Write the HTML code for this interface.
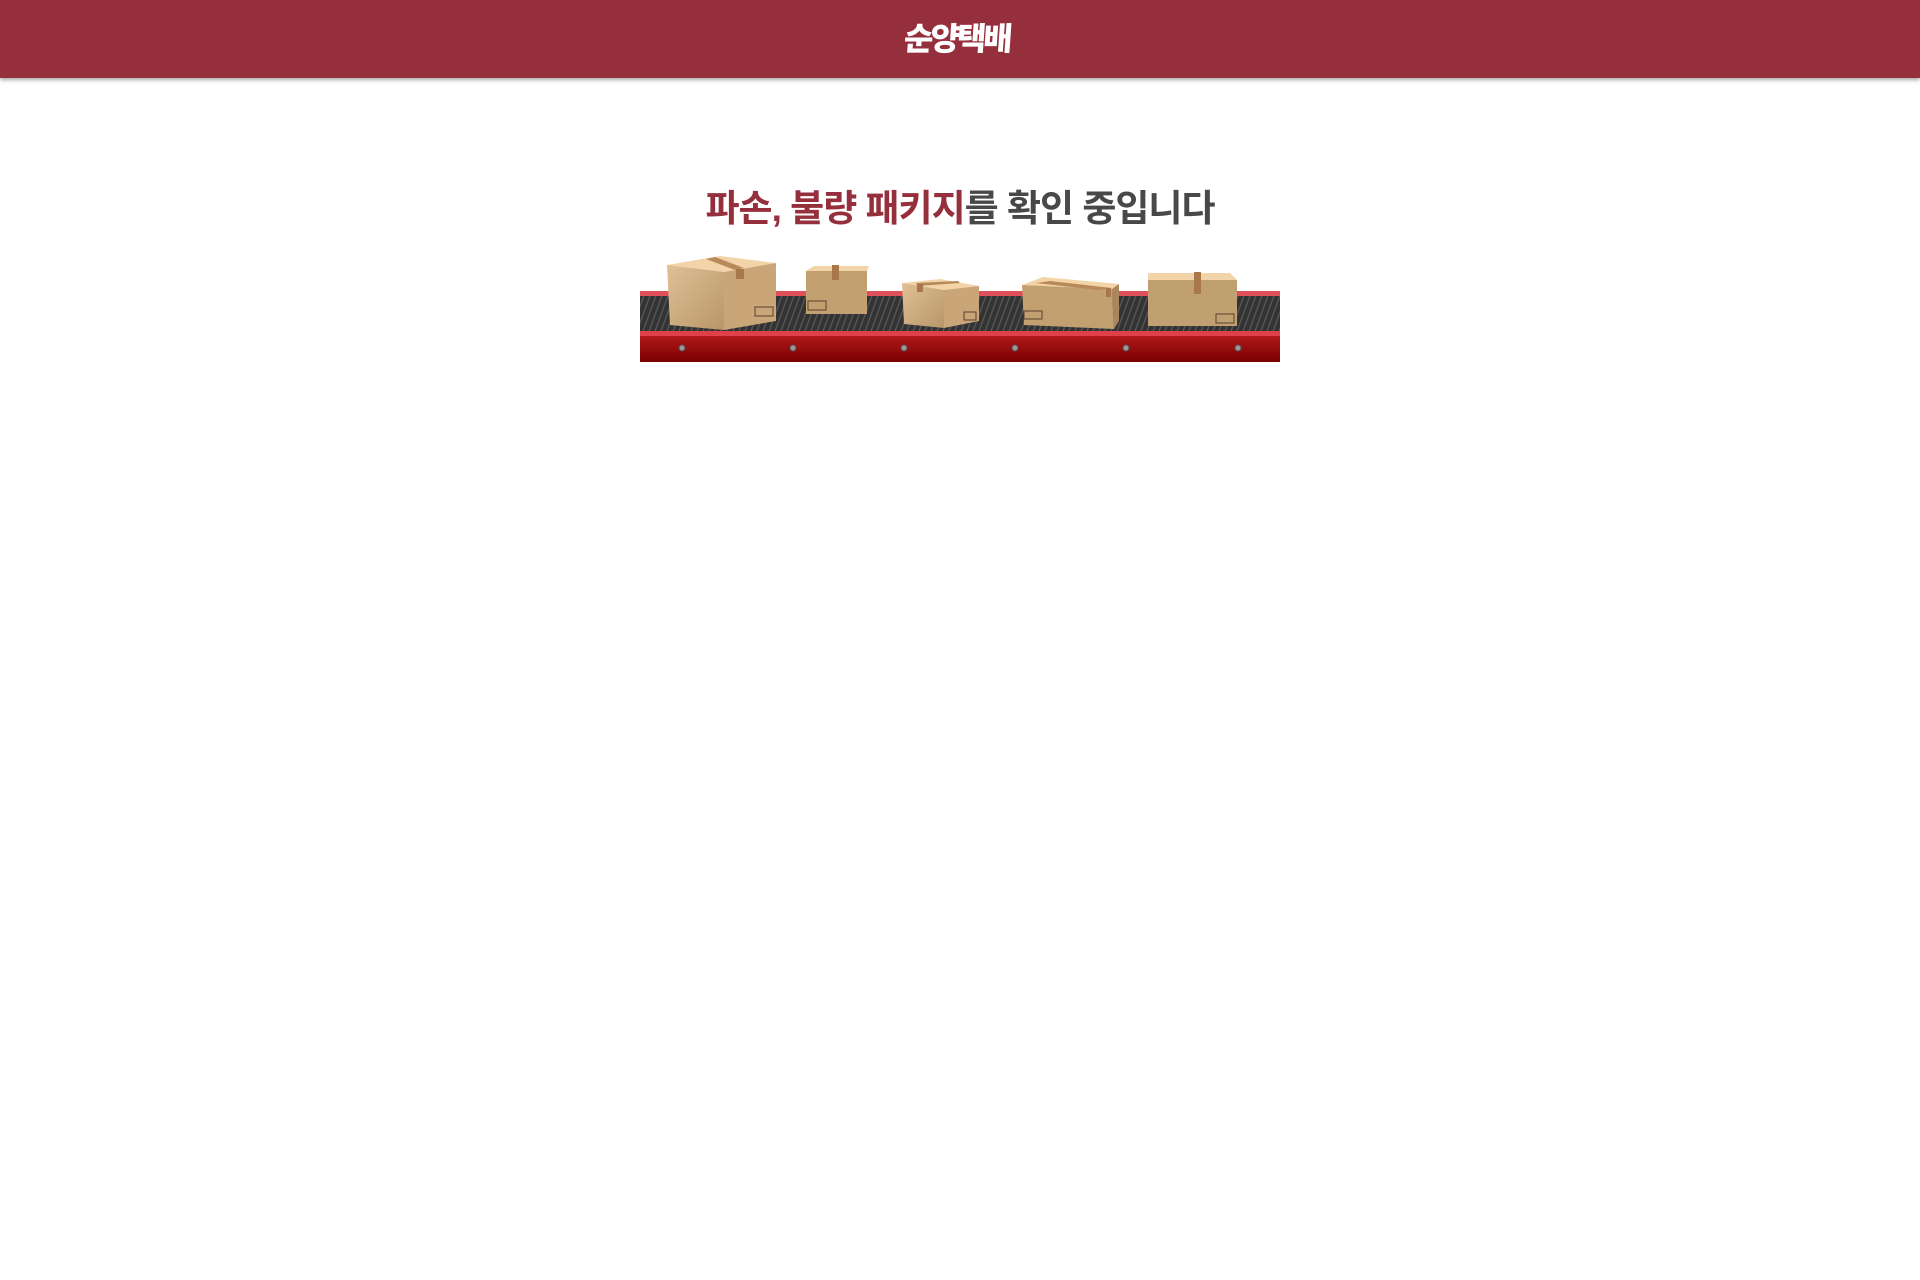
<!DOCTYPE html>
<html><head><meta charset="utf-8"><style>
html,body{margin:0;padding:0;background:#fff;width:1920px;height:1280px;overflow:hidden}
.hd{position:absolute;left:0;top:0;width:1920px;height:78px;background:#962f3c;box-shadow:0 2px 4px rgba(0,0,0,.35)}
.logo{position:absolute;left:-3px;width:1920px;top:14px;text-align:center;color:#fff;font:900 32px "Noto Sans CJK KR",sans-serif;letter-spacing:-3px;transform:skewX(-4deg)}
.tt{position:absolute;left:0;width:1920px;top:178px;text-align:center;font:700 37px "Liberation Sans","Noto Sans CJK KR",sans-serif;color:#484848;letter-spacing:-1px}
.tt span{color:#962f3c}
svg{position:absolute;left:640px;top:255px}
</style></head><body>
<div class="hd"><div class="logo">순양택배</div></div>
<div class="tt"><span>파손, 불량 패키지</span>를 확인 중입니다</div>
<svg width="640" height="108" viewBox="0 0 640 108">
<defs>
<pattern id="st" width="6" height="40" patternUnits="userSpaceOnUse" patternTransform="skewX(-20)"><rect width="6" height="40" fill="#333"/><rect width="1.5" height="40" fill="#555"/></pattern>
<linearGradient id="base" x1="0" y1="0" x2="0" y2="1"><stop offset="0" stop-color="#b01a1a"/><stop offset="1" stop-color="#7a0000"/></linearGradient>
<linearGradient id="bx" x1="0" y1="0" x2="1" y2="1"><stop offset="0" stop-color="#e0c095"/><stop offset="1" stop-color="#b8966a"/></linearGradient>
</defs>
<rect x="0" y="36" width="640" height="5" fill="#e0505a"/>
<rect x="0" y="41" width="640" height="36" fill="url(#st)"/>
<rect x="0" y="76" width="640" height="5" fill="#e0404a"/>
<rect x="0" y="81" width="640" height="26" fill="url(#base)"/>
<g fill="#999" stroke="#555" stroke-width="1">
<circle cx="42" cy="93" r="3"/><circle cx="153" cy="93" r="3"/><circle cx="264" cy="93" r="3"/><circle cx="375" cy="93" r="3"/><circle cx="486" cy="93" r="3"/><circle cx="598" cy="93" r="3"/></g>
<polygon points="27,10 80,1 136,8 84,17" fill="#f2d4a8"/>
<polygon points="27,10 84,17 84,75 30,70" fill="url(#bx)"/>
<polygon points="84,17 136,8 136,66 84,75" fill="#c9a578"/>
<polygon points="66,4 75,2 104,13 95,15" fill="#b88a5a"/><rect x="96" y="14" width="8" height="10" fill="#a8784a"/>
<rect x="115" y="52" width="18" height="9" fill="none" stroke="#5a4030"/>
<polygon points="166,16 174,11 229,11 227,16" fill="#f2d4a8"/>
<rect x="166" y="16" width="61" height="43" fill="#c2a070"/>
<rect x="192" y="10" width="7" height="15" fill="#a8784a"/>
<rect x="168" y="46" width="18" height="9" fill="none" stroke="#5a4030"/>
<polygon points="262,28 300,24 339,31 304,35" fill="#f2d4a8"/>
<polygon points="262,28 304,35 304,73 264,69" fill="url(#bx)"/>
<polygon points="304,35 339,31 339,66 304,73" fill="#c9a578"/>
<polygon points="276,28 318,26 320,28 278,31" fill="#b88a5a"/><rect x="277" y="29" width="6" height="8" fill="#a8784a"/>
<rect x="324" y="57" width="12" height="8" fill="none" stroke="#5a4030"/>
<polygon points="382,30 403,22 479,29 472,34" fill="#f2d4a8"/>
<polygon points="382,30 472,34 474,74 384,70" fill="#c2a070"/>
<polygon points="472,34 479,29 479,66 474,74" fill="#a88660"/>
<polygon points="396,28 410,26 472,33 458,35" fill="#b88a5a"/><rect x="466" y="33" width="5" height="9" fill="#a8784a"/>
<rect x="384" y="56" width="18" height="8" fill="none" stroke="#5a4030"/>
<polygon points="508,18 590,18 597,25 508,25" fill="#f2d4a8"/>
<rect x="508" y="25" width="89" height="46" fill="#c0a070"/>
<rect x="554" y="17" width="7" height="22" fill="#a8784a"/>
<rect x="576" y="59" width="18" height="9" fill="none" stroke="#5a4030"/>
</svg>
</body></html>
